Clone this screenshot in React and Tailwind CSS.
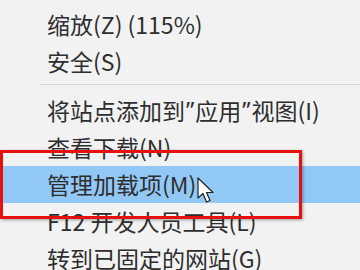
import React from 'react';

const Q = ({children}) => (
    <span className="px-[1px]" style={{fontFamily: '"Noto Sans", sans-serif'}}>{children}</span>
);

const items = [
    {label: '文件(F)', first: true},
    {label: '缩放(Z) (115%)'},
    {label: '安全(S)'},
    {sep: true},
    {label: <>将站点添加到<Q>”</Q>应用<Q>”</Q>视图(I)</>},
    {label: '查看下载(N)'},
    {label: '管理加载项(M)', active: true},
    {label: 'F12 开发人员工具(L)'},
    {label: '转到已固定的网站(G)'},
];

const App = () => {
    return (
        <div className="relative w-[360px] h-[270px] overflow-hidden bg-[#f2f2f2]"
             style={{fontFamily: '"Microsoft YaHei", "Noto Sans CJK SC", sans-serif'}}>
            <div className="flex flex-col mt-[-35px]">
                {items.map((item, i) =>
                    item.sep ? (
                        <div key={i} className="pt-[4px] pb-[7px] pl-[40px]">
                            <div className="h-px bg-[#d6d6d6]"/>
                        </div>
                    ) : (
                        <div key={i}
                             className={`${item.first ? 'h-[41px]' : 'h-[37px]'} flex items-center pl-[47px] text-[23px] text-[#2e2e2e] whitespace-nowrap ${item.active ? 'bg-[#91c8f6]' : ''}`}>
                            {item.label}
                        </div>
                    )
                )}
            </div>

            {/* red annotation box */}
            <div className="absolute left-0 top-[150px] w-[302px] h-[69px] border-[3.5px] border-[#e8100f] shadow-[1px_1px_3px_rgba(0,0,0,0.35)]"/>

            {/* mouse cursor */}
            <svg className="absolute left-[197px] top-[177px]" width="20" height="28" viewBox="0 0 20 28">
                <path d="M1 1 L1 21 L6 16.5 L9.5 25 L13 23.5 L9.5 15.5 L16 15.5 Z"
                      fill="#fff" stroke="#222" strokeWidth="1.2" strokeLinejoin="round"/>
            </svg>
        </div>
    );
};

export default App;
